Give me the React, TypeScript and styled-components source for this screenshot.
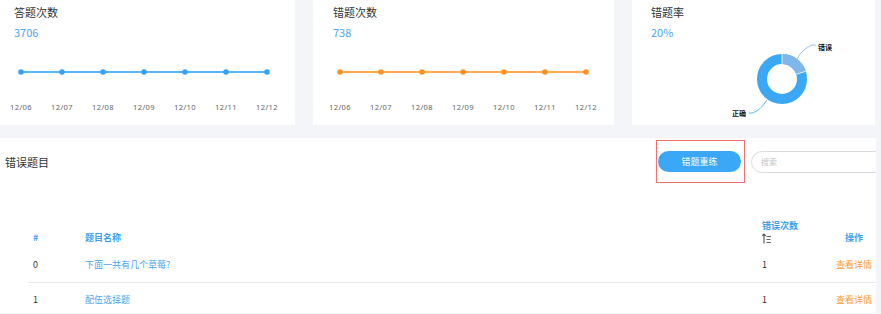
import React from 'react';
import styled, { createGlobalStyle } from 'styled-components';

const GlobalStyle = createGlobalStyle`
  html, body {
    margin: 0;
    padding: 0;
    background: #f4f5f9;
  }
  body {
    font-family: "Noto Sans CJK SC", "Noto Sans", sans-serif;
  }
`;

const Page = styled.div`
  width: 876px;
  height: 314px;
  overflow: hidden;
`;

const TopRow = styled.div`
  display: flex;
  gap: 18px;
  height: 125px;
`;

const Card = styled.div<{ width: number }>`
  width: ${(p) => p.width}px;
  flex: none;
  background: #fff;
  display: flex;
  flex-direction: column;
`;

const CardHead = styled.div<{ pad: number }>`
  padding: 5px 0 0 ${(p) => p.pad}px;
`;

const CardTitle = styled.div`
  font-size: 11px;
  line-height: 14px;
  color: #333;
`;

const CardValue = styled.div`
  margin-top: 6px;
  font-size: 11px;
  line-height: 14px;
  color: #4da6f5;
`;

const ChartSvg = styled.svg`
  display: block;
  flex: none;
`;

const Panel = styled.div`
  margin-top: 13px;
  height: 175px;
  background: #fff;
  overflow: hidden;
`;

const PanelHeader = styled.div`
  display: flex;
  align-items: center;
  height: 43px;
  padding: 2px 0 0 5px;
`;

const PanelTitle = styled.div`
  flex: 1;
  font-size: 11px;
  color: #333;
`;

const Toolbar = styled.div`
  flex: none;
  width: 220px;
  display: flex;
  align-items: center;
  gap: 6px;
`;

const Highlight = styled.div`
  flex: none;
  width: 86px;
  height: 41px;
  border: 1px solid #f07070;
  display: flex;
  align-items: center;
  padding-left: 1px;
`;

const RetryButton = styled.button`
  flex: none;
  width: 83px;
  height: 21px;
  border: none;
  border-radius: 11px;
  background: #3aa8f6;
  color: #fff;
  font-family: inherit;
  font-size: 9px;
  padding: 0;
`;

const Search = styled.div`
  flex: none;
  width: 150px;
  height: 20px;
  border: 1px solid #dcdcdc;
  border-radius: 11px;
  display: flex;
  align-items: center;
  padding-left: 9px;
  font-size: 8px;
  color: #c4c4c4;
`;

const Table = styled.div`
  margin: 35px 0 0 28px;
`;

const Row = styled.div<{ head?: boolean; divider?: boolean }>`
  display: grid;
  grid-template-columns: 52px 677px 75px 1fr;
  align-items: ${(p) => (p.head ? 'end' : 'center')};
  height: ${(p) => (p.head ? 30 : 34)}px;
  padding-bottom: ${(p) => (p.head ? 4 : 0)}px;
  box-sizing: border-box;
  border-top: ${(p) => (p.divider ? '1px solid #e6e6e6' : 'none')};
  font-size: 9px;
  line-height: 12px;
`;

const Cell = styled.div<{ tone?: 'head' | 'text' | 'link' | 'action'; center?: boolean }>`
  padding-left: ${(p) => (p.center ? 0 : 5)}px;
  text-align: ${(p) => (p.center ? 'center' : 'left')};
  font-weight: ${(p) => (p.tone === 'head' ? 600 : 400)};
  color: ${(p) =>
    p.tone === 'head'
      ? '#3d9ff0'
      : p.tone === 'link'
      ? '#4ca4ee'
      : p.tone === 'action'
      ? '#ff9a30'
      : '#333'};
`;

const SortIcon = () => (
  <svg width="10" height="11" viewBox="0 0 10 11" style={{ display: 'block', marginTop: 1 }}>
    <path d="M2 10.5V1M0.3 2.8L2 1l1.7 1.8" stroke="#555" strokeWidth="1.1" fill="none" />
    <path d="M4.5 3.5h4.5M4.5 6.5h4M4.5 9.5h4.5" stroke="#666" strokeWidth="1" />
  </svg>
);

const dates = ['12/06', '12/07', '12/08', '12/09', '12/10', '12/11', '12/12'];

const LineChart = ({
  width,
  offset,
  line,
  dot,
}: {
  width: number;
  offset: number;
  line: string;
  dot: string;
}) => {
  const xs = dates.map((_, i) => offset + i * 41);
  return (
    <ChartSvg width={width} height={86}>
      <line x1={xs[0]} y1={33} x2={xs[6]} y2={33} stroke={line} strokeWidth={2.2} />
      {xs.map((x) => (
        <circle key={x} cx={x} cy={33} r={2.8} fill={dot} />
      ))}
      {xs.map((x, i) => (
        <text
          key={i}
          x={x}
          y={71}
          textAnchor="middle"
          fontSize="7.5"
          letterSpacing="0.4"
          fill="#666"
          fontFamily="Noto Sans, sans-serif"
        >
          {dates[i]}
        </text>
      ))}
    </ChartSvg>
  );
};

const Donut = () => {
  const cx = 150;
  const cy = 40;
  const r = 20;
  const a0 = -Math.PI / 2;
  const a1 = a0 + Math.PI * 2 * 0.2;
  const p = (a: number) => `${cx + r * Math.cos(a)} ${cy + r * Math.sin(a)}`;
  return (
    <ChartSvg width={243} height={86}>
      <circle cx={cx} cy={cy} r={r} fill="none" stroke="#3aa8f6" strokeWidth={10} />
      <path d={`M${p(a0)} A${r} ${r} 0 0 1 ${p(a1)}`} fill="none" stroke="#7fb6ec" strokeWidth={10} />
      <line x1={cx} y1={cy - 25} x2={cx} y2={cy - 15} stroke="#fff" strokeWidth={0.8} />
      <line
        x1={cx + 15 * Math.cos(a1)}
        y1={cy + 15 * Math.sin(a1)}
        x2={cx + 25 * Math.cos(a1)}
        y2={cy + 25 * Math.sin(a1)}
        stroke="#fff"
        strokeWidth={0.8}
      />
      <path d="M165 20 Q170 10 180 6 L184 6" stroke="#7fb6ec" strokeWidth={0.8} fill="none" />
      <path d="M135 61 Q128 72 120 74 L117 74" stroke="#3aa8f6" strokeWidth={0.8} fill="none" />
      <text x={186} y={11} fontSize="7" fontWeight="700" fill="#111" fontFamily="Noto Sans CJK SC, sans-serif">
        错误
      </text>
      <text x={100} y={77} fontSize="7" fontWeight="700" fill="#111" fontFamily="Noto Sans CJK SC, sans-serif">
        正确
      </text>
    </ChartSvg>
  );
};

const rows = [
  { id: 0, name: '下面一共有几个草莓?', count: 1 },
  { id: 1, name: '配伍选择题', count: 1 },
];

export default function App() {
  return (
    <Page>
      <GlobalStyle />
      <TopRow>
        <Card width={295}>
          <CardHead pad={14}>
            <CardTitle>答题次数</CardTitle>
            <CardValue>3706</CardValue>
          </CardHead>
          <LineChart width={295} offset={21} line="#5cb4f7" dot="#34a2f6" />
        </Card>
        <Card width={301}>
          <CardHead pad={20}>
            <CardTitle>错题次数</CardTitle>
            <CardValue>738</CardValue>
          </CardHead>
          <LineChart width={301} offset={27} line="#ffaa55" dot="#ff9124" />
        </Card>
        <Card width={243}>
          <CardHead pad={19}>
            <CardTitle>错题率</CardTitle>
            <CardValue>20%</CardValue>
          </CardHead>
          <Donut />
        </Card>
      </TopRow>
      <Panel>
        <PanelHeader>
          <PanelTitle>错误题目</PanelTitle>
          <Toolbar>
            <Highlight>
              <RetryButton>错题重练</RetryButton>
            </Highlight>
            <Search>搜索</Search>
          </Toolbar>
        </PanelHeader>
        <Table>
          <Row head>
            <Cell tone="head">#</Cell>
            <Cell tone="head">题目名称</Cell>
            <Cell tone="head">
              错误次数
              <SortIcon />
            </Cell>
            <Cell tone="head" center>
              操作
            </Cell>
          </Row>
          {rows.map((r, i) => (
            <Row key={r.id} divider={i > 0}>
              <Cell>{r.id}</Cell>
              <Cell tone="link">{r.name}</Cell>
              <Cell>{r.count}</Cell>
              <Cell tone="action" center>
                查看详情
              </Cell>
            </Row>
          ))}
        </Table>
      </Panel>
    </Page>
  );
}
